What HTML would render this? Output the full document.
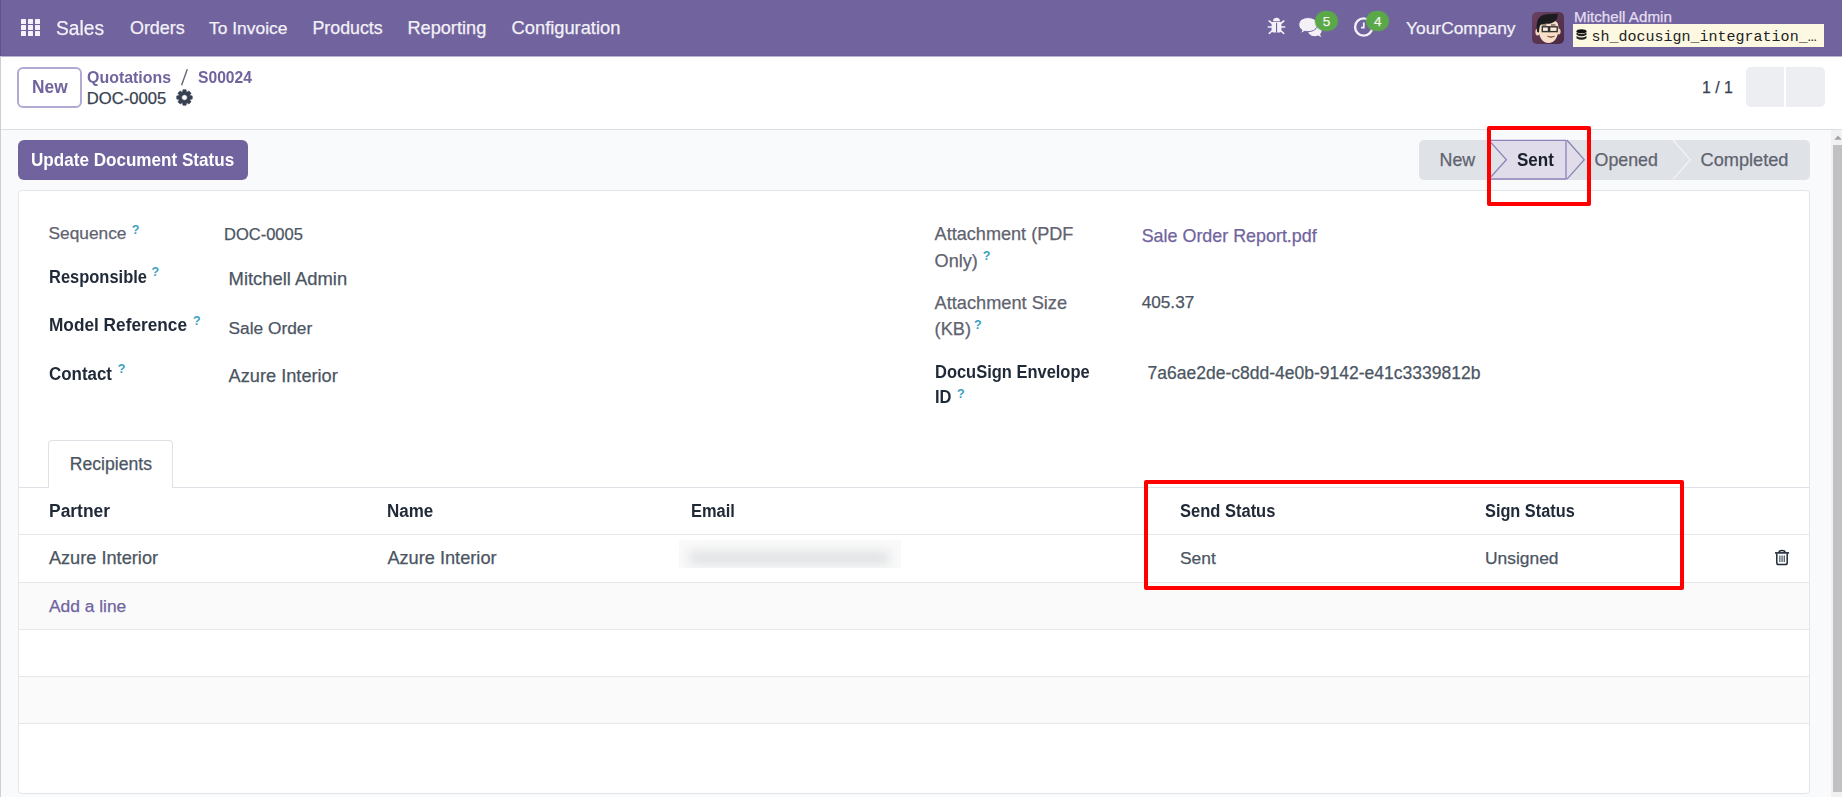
<!DOCTYPE html>
<html><head><meta charset="utf-8"><style>
html,body{margin:0;padding:0;width:1842px;height:797px;overflow:hidden;background:#f9fafb}
body{position:relative;font-family:"Liberation Sans", sans-serif}
.t{position:absolute;white-space:nowrap}
.b{position:absolute}
</style></head><body>
<div class="b" style="left:0px;top:0px;width:1842px;height:797px;background:#f9fafb"></div>
<div class="b" style="left:0px;top:0px;width:1842px;height:56px;background:#71639e"></div>
<div class="b" style="left:0px;top:55px;width:1842px;height:1px;background:#6d6099"></div>
<div class="b" style="left:0px;top:56px;width:1842px;height:1px;background:#b9b2d2"></div>
<div class="b" style="left:0px;top:56px;width:1px;height:741px;background:#cfcfd3"></div>
<div class="b" style="left:0px;top:0px;width:1px;height:56px;background:#5f5388"></div>
<div class="b" style="left:21px;top:19.0px;width:5px;height:5.0px;background:#f4f2f8;border-radius:0.5px"></div>
<div class="b" style="left:28px;top:19.0px;width:5px;height:5.0px;background:#f4f2f8;border-radius:0.5px"></div>
<div class="b" style="left:35px;top:19.0px;width:5px;height:5.0px;background:#f4f2f8;border-radius:0.5px"></div>
<div class="b" style="left:21px;top:25.2px;width:5px;height:5.0px;background:#f4f2f8;border-radius:0.5px"></div>
<div class="b" style="left:28px;top:25.2px;width:5px;height:5.0px;background:#f4f2f8;border-radius:0.5px"></div>
<div class="b" style="left:35px;top:25.2px;width:5px;height:5.0px;background:#f4f2f8;border-radius:0.5px"></div>
<div class="b" style="left:21px;top:31.4px;width:5px;height:5.0px;background:#f4f2f8;border-radius:0.5px"></div>
<div class="b" style="left:28px;top:31.4px;width:5px;height:5.0px;background:#f4f2f8;border-radius:0.5px"></div>
<div class="b" style="left:35px;top:31.4px;width:5px;height:5.0px;background:#f4f2f8;border-radius:0.5px"></div>
<div class="t" style="left:56.1px;top:18.00px;font-size:20px;line-height:20px;color:#f3f1f7;font-weight:400;transform:scaleX(0.962);transform-origin:0 0;-webkit-text-stroke:0.25px currentColor;">Sales</div>
<div class="t" style="left:130.0px;top:20.00px;font-size:17.9px;line-height:17.9px;color:#f3f1f7;font-weight:400;-webkit-text-stroke:0.25px currentColor;">Orders</div>
<div class="t" style="left:209.1px;top:20.00px;font-size:17.4px;line-height:17.4px;color:#f3f1f7;font-weight:400;-webkit-text-stroke:0.25px currentColor;">To Invoice</div>
<div class="t" style="left:312.5px;top:20.00px;font-size:17.8px;line-height:17.8px;color:#f3f1f7;font-weight:400;-webkit-text-stroke:0.25px currentColor;">Products</div>
<div class="t" style="left:407.4px;top:19.00px;font-size:18.2px;line-height:18.2px;color:#f3f1f7;font-weight:400;-webkit-text-stroke:0.25px currentColor;">Reporting</div>
<div class="t" style="left:511.6px;top:19.00px;font-size:18.3px;line-height:18.3px;color:#f3f1f7;font-weight:400;-webkit-text-stroke:0.25px currentColor;">Configuration</div>
<div class="t" style="left:1406.0px;top:20.00px;font-size:17.4px;line-height:17.4px;color:#f3f1f7;font-weight:400;-webkit-text-stroke:0.25px currentColor;">YourCompany</div>
<div class="t" style="left:1574.0px;top:9.00px;font-size:15.2px;line-height:15.2px;color:#e4def0;font-weight:400;-webkit-text-stroke:0.25px currentColor;">Mitchell Admin</div>
<div class="b" style="left:1573px;top:24px;width:251px;height:23px;background:#fdf8e2"></div>
<div class="t" style="left:1591.6px;top:30.00px;font-size:15px;line-height:15px;color:#222;font-weight:400;font-family:'Liberation Mono',monospace;">sh_docusign_integration_…</div>
<div class="b" style="left:1px;top:57px;width:1841px;height:72px;background:#fff"></div>
<div class="b" style="left:1px;top:129px;width:1841px;height:1px;background:#dcdfe3"></div>
<div class="b" style="left:17px;top:67px;width:65px;height:41px;background:#fff;border:2px solid #b3aad4;border-radius:6px;box-sizing:border-box"></div>
<div class="t" style="left:31.9px;top:78.00px;font-size:18px;line-height:18px;color:#71639e;font-weight:700;transform:scaleX(0.962);transform-origin:0 0;">New</div>
<div class="t" style="left:86.8px;top:70.00px;font-size:16.6px;line-height:16.6px;color:#71639e;font-weight:700;transform:scaleX(0.961);transform-origin:0 0;">Quotations</div>
<svg class="b" style="left:178px;top:66px" width="12" height="22" viewBox="178 66 12 22"><line x1="181.6" y1="85.3" x2="187.3" y2="69.2" stroke="#5f636f" stroke-width="1.35"/></svg>
<div class="t" style="left:198.0px;top:70.00px;font-size:16.6px;line-height:16.6px;color:#71639e;font-weight:700;transform:scaleX(0.944);transform-origin:0 0;">S00024</div>
<div class="t" style="left:86.8px;top:91.00px;font-size:16.6px;line-height:16.6px;color:#374151;font-weight:400;-webkit-text-stroke:0.25px currentColor;">DOC-0005</div>
<div class="t" style="left:1702.0px;top:80.00px;font-size:15.9px;line-height:15.9px;color:#374151;font-weight:400;-webkit-text-stroke:0.25px currentColor;">1 / 1</div>
<div class="b" style="left:1745.7px;top:67px;width:38.799999999999955px;height:39.599999999999994px;background:#eceef1;border-radius:5px 0 0 5px"></div>
<div class="b" style="left:1786px;top:67px;width:39.299999999999955px;height:39.599999999999994px;background:#eceef1;border-radius:0 5px 5px 0"></div>
<div class="b" style="left:17.5px;top:139.7px;width:230.9px;height:39.900000000000006px;background:#71639e;border-radius:6px"></div>
<div class="t" style="left:31.3px;top:152.00px;font-size:17.9px;line-height:17.9px;color:#ffffff;font-weight:700;transform:scaleX(0.955);transform-origin:0 0;">Update Document Status</div>
<div class="b" style="left:1418.8px;top:140px;width:391.4000000000001px;height:39.80000000000001px;background:#dfe2e7;border-radius:5px"></div>
<div class="t" style="left:1439.6px;top:152.00px;font-size:17.8px;line-height:17.8px;color:#5f636f;font-weight:400;-webkit-text-stroke:0.25px currentColor;">New</div>
<div class="t" style="left:1594.6px;top:152.00px;font-size:17.8px;line-height:17.8px;color:#5f636f;font-weight:400;-webkit-text-stroke:0.25px currentColor;">Opened</div>
<div class="t" style="left:1700.5px;top:151.00px;font-size:18.2px;line-height:18.2px;color:#5f636f;font-weight:400;-webkit-text-stroke:0.25px currentColor;">Completed</div>
<div class="b" style="left:18.3px;top:190.3px;width:1791.7px;height:604.0px;background:#fff;border:1px solid #e4e6ea;border-radius:4px;box-sizing:border-box"></div>
<div class="t" style="left:48.6px;top:225.00px;font-size:17.3px;line-height:17.3px;color:#5f636f;font-weight:400;-webkit-text-stroke:0.25px currentColor;">Sequence</div>
<div class="t" style="left:224.0px;top:226.00px;font-size:16.5px;line-height:16.5px;color:#4b5563;font-weight:400;-webkit-text-stroke:0.25px currentColor;">DOC-0005</div>
<div class="t" style="left:48.8px;top:268.00px;font-size:18px;line-height:18px;color:#1f2937;font-weight:700;transform:scaleX(0.915);transform-origin:0 0;">Responsible</div>
<div class="t" style="left:228.6px;top:270.00px;font-size:18.4px;line-height:18.4px;color:#4b5563;font-weight:400;-webkit-text-stroke:0.25px currentColor;">Mitchell Admin</div>
<div class="t" style="left:48.8px;top:316.00px;font-size:18px;line-height:18px;color:#1f2937;font-weight:700;transform:scaleX(0.958);transform-origin:0 0;">Model Reference</div>
<div class="t" style="left:228.6px;top:320.00px;font-size:17.3px;line-height:17.3px;color:#4b5563;font-weight:400;-webkit-text-stroke:0.25px currentColor;">Sale Order</div>
<div class="t" style="left:48.8px;top:365.00px;font-size:18px;line-height:18px;color:#1f2937;font-weight:700;transform:scaleX(0.94);transform-origin:0 0;">Contact</div>
<div class="t" style="left:228.6px;top:367.00px;font-size:18.2px;line-height:18.2px;color:#4b5563;font-weight:400;-webkit-text-stroke:0.25px currentColor;">Azure Interior</div>
<div class="t" style="left:934.6px;top:225.00px;font-size:18.1px;line-height:18.1px;color:#5f636f;font-weight:400;-webkit-text-stroke:0.25px currentColor;">Attachment (PDF</div>
<div class="t" style="left:934.6px;top:252.00px;font-size:18.1px;line-height:18.1px;color:#5f636f;font-weight:400;-webkit-text-stroke:0.25px currentColor;">Only)</div>
<div class="t" style="left:1141.7px;top:228.00px;font-size:17.9px;line-height:17.9px;color:#71639e;font-weight:400;-webkit-text-stroke:0.25px currentColor;">Sale Order Report.pdf</div>
<div class="t" style="left:934.6px;top:294.00px;font-size:18.2px;line-height:18.2px;color:#5f636f;font-weight:400;-webkit-text-stroke:0.25px currentColor;">Attachment Size</div>
<div class="t" style="left:934.6px;top:320.00px;font-size:18.2px;line-height:18.2px;color:#5f636f;font-weight:400;-webkit-text-stroke:0.25px currentColor;">(KB)</div>
<div class="t" style="left:1141.7px;top:294.00px;font-size:17.2px;line-height:17.2px;color:#4b5563;font-weight:400;-webkit-text-stroke:0.25px currentColor;">405.37</div>
<div class="t" style="left:934.6px;top:363.00px;font-size:18px;line-height:18px;color:#1f2937;font-weight:700;transform:scaleX(0.915);transform-origin:0 0;">DocuSign Envelope</div>
<div class="t" style="left:934.6px;top:388.00px;font-size:18px;line-height:18px;color:#1f2937;font-weight:700;transform:scaleX(0.915);transform-origin:0 0;">ID</div>
<div class="t" style="left:1147.6px;top:365.00px;font-size:17.5px;line-height:17.5px;color:#4b5563;font-weight:400;-webkit-text-stroke:0.25px currentColor;">7a6ae2de-c8dd-4e0b-9142-e41c3339812b</div>
<div class="t" style="left:131.8px;top:224.00px;font-size:12.5px;line-height:12.5px;color:#3c9ec2;font-weight:700;">?</div>
<div class="t" style="left:151.6px;top:266.00px;font-size:12.5px;line-height:12.5px;color:#3c9ec2;font-weight:700;">?</div>
<div class="t" style="left:193.0px;top:315.00px;font-size:12.5px;line-height:12.5px;color:#3c9ec2;font-weight:700;">?</div>
<div class="t" style="left:117.8px;top:363.00px;font-size:12.5px;line-height:12.5px;color:#3c9ec2;font-weight:700;">?</div>
<div class="t" style="left:982.7px;top:250.00px;font-size:12.5px;line-height:12.5px;color:#3c9ec2;font-weight:700;">?</div>
<div class="t" style="left:973.9px;top:319.00px;font-size:12.5px;line-height:12.5px;color:#3c9ec2;font-weight:700;">?</div>
<div class="t" style="left:957.1px;top:388.00px;font-size:12.5px;line-height:12.5px;color:#3c9ec2;font-weight:700;">?</div>
<div class="b" style="left:18.3px;top:487px;width:1791.7px;height:1px;background:#dee2e6"></div>
<div class="b" style="left:48.4px;top:440px;width:124.79999999999998px;height:48px;background:#fff;border:1px solid #dee2e6;border-bottom:none;border-radius:4px 4px 0 0;box-sizing:border-box"></div>
<div class="t" style="left:69.8px;top:456.00px;font-size:17.6px;line-height:17.6px;color:#4b5563;font-weight:400;-webkit-text-stroke:0.25px currentColor;">Recipients</div>
<div class="b" style="left:19px;top:534px;width:1790px;height:1px;background:#e5e7eb"></div>
<div class="b" style="left:19px;top:582px;width:1790px;height:47px;background:#fafafa"></div>
<div class="b" style="left:19px;top:676px;width:1790px;height:47px;background:#fafafa"></div>
<div class="b" style="left:19px;top:582px;width:1790px;height:1px;background:#e5e7eb"></div>
<div class="b" style="left:19px;top:629px;width:1790px;height:1px;background:#e5e7eb"></div>
<div class="b" style="left:19px;top:676px;width:1790px;height:1px;background:#e5e7eb"></div>
<div class="b" style="left:19px;top:723px;width:1790px;height:1px;background:#e5e7eb"></div>
<div class="t" style="left:48.9px;top:502.00px;font-size:18px;line-height:18px;color:#1f2937;font-weight:700;transform:scaleX(0.969);transform-origin:0 0;">Partner</div>
<div class="t" style="left:387.4px;top:502.00px;font-size:18px;line-height:18px;color:#1f2937;font-weight:700;transform:scaleX(0.943);transform-origin:0 0;">Name</div>
<div class="t" style="left:690.8px;top:502.00px;font-size:18px;line-height:18px;color:#1f2937;font-weight:700;transform:scaleX(0.912);transform-origin:0 0;">Email</div>
<div class="t" style="left:1180.0px;top:502.00px;font-size:18px;line-height:18px;color:#1f2937;font-weight:700;transform:scaleX(0.917);transform-origin:0 0;">Send Status</div>
<div class="t" style="left:1485.0px;top:502.00px;font-size:18px;line-height:18px;color:#1f2937;font-weight:700;transform:scaleX(0.906);transform-origin:0 0;">Sign Status</div>
<div class="t" style="left:48.9px;top:549.00px;font-size:18.2px;line-height:18.2px;color:#4b5563;font-weight:400;-webkit-text-stroke:0.25px currentColor;">Azure Interior</div>
<div class="t" style="left:387.4px;top:549.00px;font-size:18.2px;line-height:18.2px;color:#4b5563;font-weight:400;-webkit-text-stroke:0.25px currentColor;">Azure Interior</div>
<div class="t" style="left:1180.0px;top:550.00px;font-size:17.4px;line-height:17.4px;color:#4b5563;font-weight:400;-webkit-text-stroke:0.25px currentColor;">Sent</div>
<div class="t" style="left:1485.0px;top:550.00px;font-size:17.4px;line-height:17.4px;color:#4b5563;font-weight:400;-webkit-text-stroke:0.25px currentColor;">Unsigned</div>
<div class="t" style="left:48.9px;top:598.00px;font-size:17.4px;line-height:17.4px;color:#71639e;font-weight:400;-webkit-text-stroke:0.25px currentColor;">Add a line</div>
<div class="b" style="left:679px;top:540px;width:222px;height:28px;overflow:hidden;background:#fafafa"><div class="b" style="left:10px;top:12px;width:200px;height:12px;background:#dcdee1;filter:blur(6px)"></div></div>
<div class="b" style="left:1831px;top:130px;width:11px;height:667px;background:#f1f1f1"></div>
<div class="b" style="left:1832.5px;top:145px;width:9.5px;height:646.5px;background:#c1c1c1"></div>
<svg class="b" style="left:1267px;top:17px" width="19" height="18" viewBox="0 0 19 18">
<path d="M6 4.3 A3.5 3.5 0 0 1 13 4.3 Z" fill="#f3f1f7"/>
<path d="M4.6 5 H14.4 V13 Q14.4 15.6 11.5 15.6 H7.5 Q4.6 15.6 4.6 13 Z" fill="#f3f1f7"/>
<rect x="9" y="5.8" width="1.1" height="9.8" fill="#71639e"/>
<g stroke="#f3f1f7" stroke-width="1.6" stroke-linecap="round">
<line x1="2.2" y1="4" x2="5.5" y2="6.6"/><line x1="16.8" y1="4" x2="13.5" y2="6.6"/>
<line x1="1.3" y1="10" x2="5" y2="10"/><line x1="17.7" y1="10" x2="14" y2="10"/>
<line x1="2.3" y1="16.3" x2="5.5" y2="13.5"/><line x1="16.7" y1="16.3" x2="13.5" y2="13.5"/>
</g></svg>
<svg class="b" style="left:1294px;top:12px" width="32" height="28" viewBox="0 0 32 28">
<path d="M13.5 17 C13.8 21.5 16.5 24.2 20.5 24.2 C21.8 24.2 23 24 24 23.6 L27.4 24.9 L26 22.2 C27.2 21.2 27.8 19.8 27.8 18.3 C27.8 15.5 25.5 13.5 22.5 13.2 Z" fill="#f3f1f7"/>
<path d="M14.15 5.6 C19.6 5.6 23.5 8.6 23.5 12.6 C23.5 16.6 19.6 19.6 14.15 19.6 C13 19.6 12 19.5 11 19.2 L6.5 21.6 L8 18.1 C5.8 16.8 4.8 14.8 4.8 12.6 C4.8 8.6 8.7 5.6 14.15 5.6 Z" fill="#f3f1f7" stroke="#71639e" stroke-width="1"/>
</svg>
<svg class="b" style="left:1353px;top:16px" width="22" height="22" viewBox="0 0 22 22">
<circle cx="10.7" cy="11" r="8.6" fill="none" stroke="#f3f1f7" stroke-width="2.4"/>
<path d="M10.8 6.5 V11.6 H8" fill="none" stroke="#f3f1f7" stroke-width="1.8"/>
</svg>
<div class="b" style="left:1314.5px;top:10.7px;width:23.7px;height:20.1px;border-radius:10px;background:#5aa848;box-shadow:0 0 0 1px #6a8f7a33"></div>
<div class="t" style="left:1322.7px;top:15.00px;font-size:13.5px;line-height:13.5px;color:#f4f7ee;font-weight:400;-webkit-text-stroke:0.25px currentColor;">5</div>
<div class="b" style="left:1365.8px;top:10.7px;width:23.7px;height:20.1px;border-radius:10px;background:#5aa848;box-shadow:0 0 0 1px #6a8f7a33"></div>
<div class="t" style="left:1374.0px;top:15.00px;font-size:13.5px;line-height:13.5px;color:#f4f7ee;font-weight:400;-webkit-text-stroke:0.25px currentColor;">4</div>
<svg class="b" style="left:1531.5px;top:12px" width="32" height="32" viewBox="0 0 32 32">
<defs><linearGradient id="ag" x1="0" y1="0" x2="1" y2="1"><stop offset="0" stop-color="#6a4262"/><stop offset="1" stop-color="#4a2840"/></linearGradient></defs>
<rect x="0" y="0" width="32" height="32" rx="5" fill="url(#ag)"/>
<ellipse cx="5.6" cy="20" rx="2.2" ry="3.6" fill="#f3d3bb"/>
<ellipse cx="26.8" cy="19.5" rx="1.8" ry="3" fill="#f3d3bb"/>
<path d="M6.5 16 C6.5 9 10 8 16.5 8 C23 8 26.5 9 26.5 16 C26.5 25 22.5 31 16.5 31 C10.5 31 6.5 25 6.5 16 Z" fill="#f8dfc8"/>
<path d="M5.2 20 C3.8 12 5 5 11 3 C16 1.5 21 2.5 25.5 1.5 C26.5 5 24 9.5 20 11 C16 12.5 11 11 8.5 13 C7.5 14.5 7 17 7 20.5 Z" fill="#1c1b1e"/>
<path d="M10 13 H14.5 M19 13 H23.5" stroke="#3b2f2a" stroke-width="1"/>
<rect x="10.3" y="14.8" width="6.2" height="4.8" fill="#fff" fill-opacity="0.35" stroke="#333" stroke-width="1.4"/>
<rect x="17.6" y="14.8" width="7.6" height="4.8" fill="#fff" fill-opacity="0.35" stroke="#333" stroke-width="1.4"/>
<path d="M15.5 24.3 Q19 26.8 22.5 24.3 Q19 25.3 15.5 24.3 Z" fill="#fff" stroke="#8a5a4a" stroke-width="0.9"/>
</svg>
<svg class="b" style="left:1576px;top:28.8px" width="11" height="12" viewBox="0 0 11 12">
<ellipse cx="5.5" cy="2.2" rx="5" ry="2" fill="#111"/>
<path d="M0.5 3.6 Q5.5 6.6 10.5 3.6 V5.8 Q5.5 8.8 0.5 5.8 Z" fill="#222"/>
<path d="M0.5 7 Q5.5 10 10.5 7 V9.2 Q5.5 12.2 0.5 9.2 Z" fill="#222"/>
</svg>
<svg class="b" style="left:176px;top:89px" width="17" height="17" viewBox="0 0 17 17">
<path fill-rule="evenodd" fill="#374151" stroke="#374151" stroke-width="0.6" stroke-linejoin="round" d="M6.51,3.05 L6.93,0.76 L10.07,0.76 L10.49,3.05 L10.95,3.24 L12.86,1.92 L15.08,4.14 L13.76,6.05 L13.95,6.51 L16.24,6.93 L16.24,10.07 L13.95,10.49 L13.76,10.95 L15.08,12.86 L12.86,15.08 L10.95,13.76 L10.49,13.95 L10.07,16.24 L6.93,16.24 L6.51,13.95 L6.05,13.76 L4.14,15.08 L1.92,12.86 L3.24,10.95 L3.05,10.49 L0.76,10.07 L0.76,6.93 L3.05,6.51 L3.24,6.05 L1.92,4.14 L4.14,1.92 L6.05,3.24 Z M8.5 5.7 A2.8 2.8 0 1 0 8.5 11.3 A2.8 2.8 0 1 0 8.5 5.7 Z"/>
</svg>
<svg class="b" style="left:1774px;top:549px" width="16" height="17" viewBox="0 0 16 17">
<path d="M5 3.2 Q5.3 1.5 8 1.5 Q10.7 1.5 11 3.2" fill="none" stroke="#1f2937" stroke-width="1.5"/>
<rect x="1" y="3.1" width="14" height="1.6" fill="#1f2937"/>
<path d="M2.8 4.5 V13.8 Q2.8 15.6 4.6 15.6 H11.4 Q13.2 15.6 13.2 13.8 V4.5" fill="none" stroke="#1f2937" stroke-width="1.5"/>
<rect x="5.3" y="6.5" width="1.1" height="6.5" fill="#374151"/>
<rect x="7.5" y="6.5" width="1.1" height="6.5" fill="#374151"/>
<rect x="9.7" y="6.5" width="1.1" height="6.5" fill="#374151"/>
</svg>
<svg class="b" style="left:1418px;top:138px" width="393" height="44" viewBox="1418 138 393 44">
<path d="M1489 140.4 H1566 L1584.3 159.7 L1566 179 H1489 L1506.4 159.7 Z" fill="#e0dcea"/>
<path d="M1489 140.4 H1566 M1489 179 H1566 M1566 140.4 V179 M1566.8 140 L1584.3 159.7 L1566.8 179.4 M1489 140.4 L1506.4 159.7 L1489 179" fill="none" stroke="#8e83b7" stroke-width="1.3"/>
<path d="M1673 140 L1690.3 159.7 L1673 179.4" fill="none" stroke="#f4f5f7" stroke-width="1.2"/>
</svg>
<div class="t" style="left:1516.7px;top:151.00px;font-size:18px;line-height:18px;color:#1a202c;font-weight:700;transform:scaleX(0.946);transform-origin:0 0;">Sent</div>
<div class="b" style="left:1487px;top:126px;width:104px;height:80px;border:4.2px solid #fe0000;box-sizing:border-box;border-radius:2px"></div>
<div class="b" style="left:1144px;top:480px;width:540px;height:110px;border:4.2px solid #fe0000;box-sizing:border-box;border-radius:2px"></div>
<svg class="b" style="left:1831px;top:130px" width="11" height="14" viewBox="0 0 11 14"><path d="M3.3 9.8 L7 5.6 L10.7 9.8 Z" fill="#a3a3a3"/></svg>
</body></html>
